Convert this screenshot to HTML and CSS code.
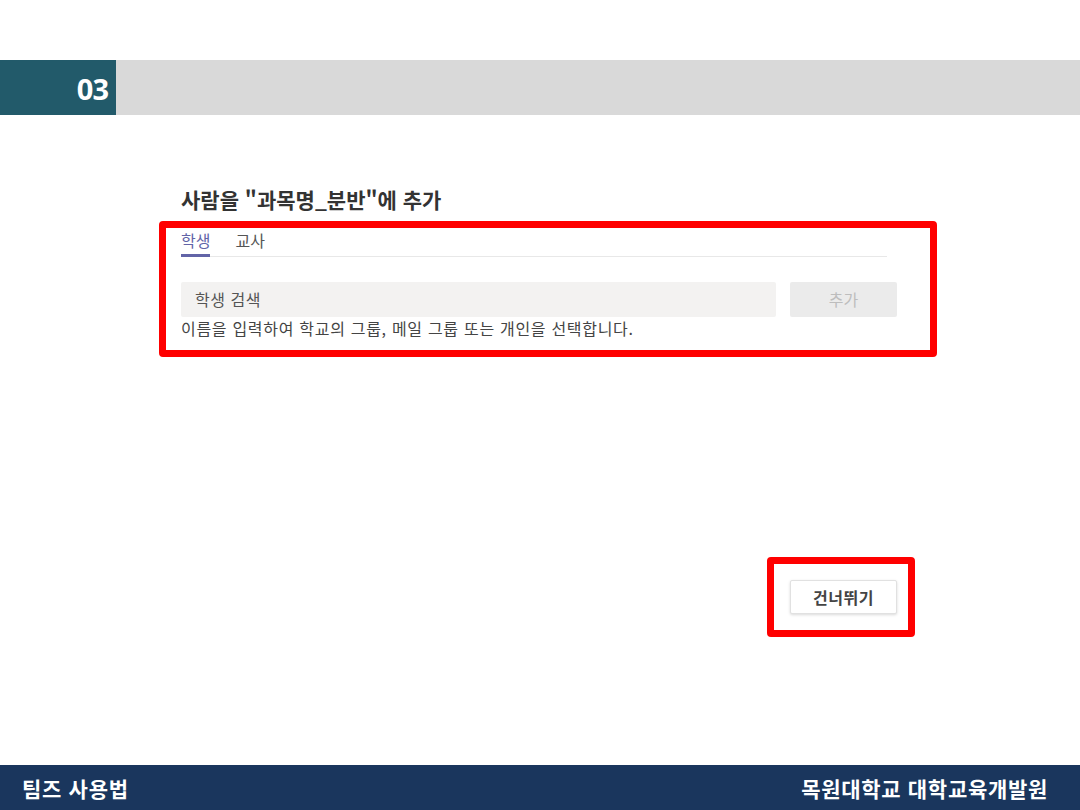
FILE: index.html
```html
<!DOCTYPE html>
<html lang="ko">
<head>
<meta charset="utf-8">
<title>팀즈 사용법</title>
<link rel="stylesheet" href="styles.css">
</head>
<body>
<div class="page">
  <div class="top-space"></div>
  <header class="header">
    <div class="num">03</div>
    <div class="bar"></div>
  </header>
  <main class="main">
    <h1 class="title">사람을 "과목명_분반"에 추가</h1>
    <div class="hl hl-dialog">
      <div class="tabs">
        <span class="tab active">학생</span>
        <span class="tab">교사</span>
      </div>
      <div class="search-row">
        <div class="search">학생 검색</div>
        <div class="add">추가</div>
      </div>
      <p class="hint">이름을 입력하여 학교의 그룹, 메일 그룹 또는 개인을 선택합니다.</p>
    </div>
    <div class="hl hl-skip">
      <div class="skip">건너뛰기</div>
    </div>
  </main>
  <footer class="footer">
    <span class="f-left">팀즈 사용법</span>
    <span class="f-right">목원대학교 대학교육개발원</span>
  </footer>
</div>
</body>
</html>
```

FILE: styles.css
```css
* { box-sizing: border-box; }
html, body { margin: 0; padding: 0; background: #fff; }
body {
  font-family: "Noto Sans CJK KR", "Noto Sans", sans-serif;
  color: #333;
}
.page {
  width: 1080px;
  height: 810px;
  display: flex;
  flex-direction: column;
  overflow: hidden;
}
.top-space { height: 60px; }
.header {
  height: 55px;
  display: flex;
}
.num {
  width: 116px;
  background: #225a6a;
  color: #fff;
  font-family: "Open Sans", "Noto Sans", sans-serif;
  font-weight: 700;
  font-size: 29px;
  line-height: 57px;
  text-align: right;
  padding-right: 8px;
  letter-spacing: -1px;
}
.bar { flex: 1; background: #d9d9d9; }

.main {
  flex: 1;
  padding-top: 70px;
  padding-left: 159px;
  display: flex;
  flex-direction: column;
  align-items: flex-start;
}
.title {
  margin: 0 0 7px 22px;
  font-size: 21px;
  line-height: 29px;
  font-weight: 700;
  color: #333;
  letter-spacing: 0;
}
.hl {
  border: 7px solid #ff0000;
  border-radius: 4px;
}
.hl-dialog {
  width: 778px;
  height: 136px;
  padding: 1px 33px 0 15px;
}
.tabs {
  width: 706px;
  display: flex;
  gap: 25px;
  border-bottom: 1px solid #e8e8e8;
}
.tab {
  font-size: 16px;
  line-height: 21px;
  padding: 1px 0 3px;
  color: #555;
  border-bottom: 3px solid transparent;
  margin-bottom: -1px;
}
.tab.active {
  color: #6264a7;
  border-bottom-color: #6264a7;
}
.search-row {
  display: flex;
  margin-top: 25px;
  gap: 14px;
}
.search {
  width: 595px;
  height: 35px;
  background: #f3f2f1;
  border-radius: 2px;
  font-size: 16px;
  line-height: 35px;
  padding-left: 14px;
  color: #555;
  letter-spacing: 0.5px;
}
.add {
  width: 107px;
  height: 35px;
  background: #ebebeb;
  border-radius: 2px;
  font-size: 16px;
  line-height: 35px;
  text-align: center;
  color: #bdbdbd;
}
.hint {
  margin: 0;
  font-size: 16px;
  line-height: 20px;
  margin-top: 1px;
  color: #444;
  letter-spacing: 0.7px;
}
.hl-skip {
  margin-top: 200px;
  margin-left: 608px;
  width: 148px;
  height: 80px;
  padding: 16px 0 0 16px;
}
.skip {
  width: 107px;
  height: 34px;
  background: #fff;
  border: 1px solid #e1e1e1;
  border-radius: 2px;
  box-shadow: 0 1px 3px rgba(0,0,0,0.15);
  font-size: 16px;
  font-weight: 700;
  line-height: 32px;
  text-align: center;
  color: #444;
  letter-spacing: 0.5px;
}
.footer {
  height: 45px;
  background: #1a365d;
  color: #fff;
  display: flex;
  justify-content: space-between;
  align-items: center;
  padding: 0 32px 0 22px;
  font-weight: 700;
  font-size: 21px;
  letter-spacing: 0.7px;
}
```
